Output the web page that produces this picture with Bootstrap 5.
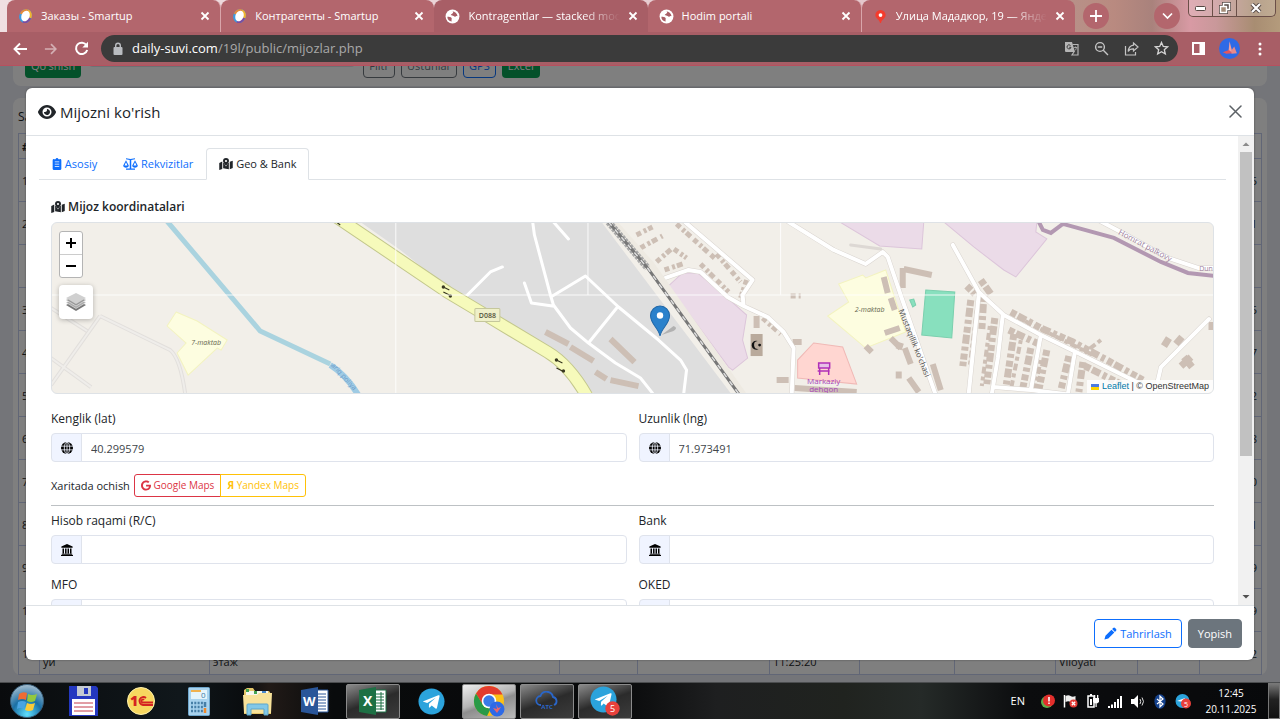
<!DOCTYPE html>
<html lang="uz">
<head>
<meta charset="utf-8">
<meta name="viewport" content="width=device-width, initial-scale=1">
<title>Mijozlar</title>
<link href="https://cdn.jsdelivr.net/npm/bootstrap@5.3.0/dist/css/bootstrap.min.css" rel="stylesheet">
<style>
:root{--ui:"Open Sans","Noto Sans",sans-serif}
html,body{height:100%}
body{font-family:var(--ui);font-size:12px;line-height:18px;color:#212529;overflow:hidden}
button,input{font-family:inherit}
svg{display:block;flex:none}
.ico{display:inline-block;vertical-align:-2px;fill:currentColor}

/* browser chrome */
.strip{height:32px;background:linear-gradient(90deg,#f0dfe2 0,#e4c6cb 70%,#b7928a 83%,#b98a80 87%,#a9827c 90%,#d89aa4 93%,#c9989a 95%,#a88d72 98%,#b49b7c 100%);padding-left:7px}
.tabset{flex:0 1 1068px;min-width:0}
.btab{flex:1 1 0;min-width:0;height:32px;background:#b3666d;color:#fff;padding:0 10px 0 11px;gap:8px;border-radius:8px 8px 0 0}
.btab.on{background:#a85e66}
.btab.sep{border-right:1px solid #d9a5aa;border-radius:8px 8px 0 0}
.btab .ttl{flex:1;min-width:0;overflow:hidden;white-space:nowrap;line-height:20px;font-size:11px}
.btab .fade-end{-webkit-mask-image:linear-gradient(90deg,#000 75%,transparent);mask-image:linear-gradient(90deg,#000 75%,transparent)}
.plain{border:0;background:none;padding:0;color:inherit;display:flex;align-items:center;justify-content:center}
.round{width:26px;height:26px;border-radius:50%;background:#b3666d;color:#fff}
.wctl{height:17px;border:1px solid #6b4f48;border-top:0;border-radius:0 0 5px 5px;margin-right:4px;background:#ffffff30}
.wctl button{width:24px;border-right:1px solid #6b4f48}
.wctl button:last-child{width:38px;border:0}
.tools{height:34px;background:#a85e66;border-bottom:1px solid #b8505f;color:#fff;padding:0 18px 0 12px}
.addr{height:27px;border-radius:14px;background:#3b3b3b;padding:0 9px 0 11px;margin-left:12px}
.addr .site{font-size:13px;color:#fff}
.addr .rest{font-size:13px;color:#a9a9a9}

/* page under the dialog */
.pagearea{background:#e8eaf2}
.pcard{background:#fff;border-radius:8px;margin:0 13px}
.ptools{padding:0 12px 8px;margin-top:-16px;height:36px;gap:6px}
.ptools .btn{font-size:11px;line-height:18px;padding:6px 5px 2px;border-radius:4px;height:28px}
.pgreen{background:#08a254;color:#fff}
.grid{table-layout:fixed;width:100%;margin:0;font-size:11px}
.grid td,.grid th{height:43px;border:1px solid #c3cdec;padding:0 3px;vertical-align:middle;line-height:17px}
.grid th{height:25px}
.grid td:last-child{text-align:right;padding-right:4px}
.shade{background:rgba(0,0,0,.5);padding:22px 26px}

/* dialog */
.dlg{background:#fff;border-radius:6px;overflow:hidden;box-shadow:0 0 2px #444}
.dlg-head{height:48px;padding:0 12px;border-bottom:1px solid #dee2e6}
.dlg-head h1{font-size:15px;line-height:22px;font-weight:400}
.dlg-main{padding:12px 12px 0 13px}
.nav-tabs .nav-link{font-size:11px;padding:6px 12px;line-height:18px;border-radius:4px 4px 0 0;color:#0d6efd}
.nav-tabs .nav-link.active{color:#212529}
.pane{padding:18px 12px 0}
.pane h2{font-size:12px;line-height:18px;margin:0 0 6px;font-weight:600}
.mapbox{height:172px;border:1px solid #dee2e6;border-radius:6px;background:#f2efe9;margin-bottom:16px}
.mapbox>svg{width:100%;height:100%}
.zoomer{left:7px;top:8px;border:1px solid #b4b4b4;border-radius:3px;background:#fff;width:24px}
.zoomer button{width:22px;height:22px;color:#000}
.zoomer button+button{border-top:1px solid #ccc;height:23px}
.layers{left:7px;top:62px;width:34px;height:34px;border-radius:4px;background:#fff;box-shadow:0 1px 5px #0004}
.attrib{right:0;bottom:0;background:#ffffffd0;font:9px/13px "Liberation Sans",sans-serif;padding:0 4px;color:#333}
.attrib a{color:#0078a8;text-decoration:none}
.fields{--bs-gutter-x:12px}
.fields label{display:block;margin-bottom:5px;line-height:18px}
.fields .input-group-text{width:31px;padding:0 9px;background:#f0f4ff;border-color:#dfe3ec;border-radius:4px;color:#212529}
.fields .form-control{height:29px;min-height:0;padding:5px 9px 4px;font-size:11px;line-height:18px;border-color:#dfe3ec;border-radius:4px;color:#41464b}
.maps{margin:12px 0 8px;gap:4px;font-size:11px}
.maps .btn{font-size:10px;line-height:15px;padding:3px 6px;border-radius:3px}
.pane hr{margin:0 0 6px;color:#6c757d;opacity:.45}
.sbar{width:16px;background:#f1f1f1;color:#505050}
.sbar i{display:block;width:12px;height:304px;background:#c1c1c1}
.dlg-foot{height:55px;border-top:1px solid #dee2e6;padding:0 12px;gap:6px}
.dlg-foot .btn{font-size:11px;line-height:18px;padding:5px 9px;height:29px;border-radius:4px}

/* taskbar */
.task{height:37px;background:linear-gradient(90deg,#090b0d 0,#10171b 14%,#0a0d0f 19%,#211a17 21%,#090b0c 26%,#08090a 48%,#1e1f20 56%,#20231f 66%,#252a28 72%,#0b0c0e 80%,#08090b 100%);border-top:1px solid #4b4d4f;color:#fff}
.tslot{width:58px;height:36px;padding:0 2px}
.tslot.run>span{width:54px;height:35px;border:1px solid #8b8b8b;border-radius:2px;background:linear-gradient(160deg,#8a8a8a,#2b2b2b 50%,#3c3c3c)}
.tslot.now>span{background:linear-gradient(160deg,#eee,#b5b5b5 45%,#8e8e8e 55%,#bbb)}
.tslot span{display:flex;align-items:center;justify-content:center}
.clk{width:66px;text-align:center;line-height:16px;margin:0 4px 0 7px;font-size:10px}
.desk{width:12px;height:36px;border:1px solid #777;background:linear-gradient(#777,#222 45%,#111)}
</style>
</head>
<body class="d-flex flex-column">
<svg width="0" height="0" class="position-absolute" aria-hidden="true">
 <defs>
  <symbol id="x" viewBox="0 0 10 10"><path d="M1.500 1.500l7 7m0-7l-7 7" stroke="currentColor" stroke-width="1.800" fill="none"/></symbol>
  <symbol id="smart" viewBox="0 0 16 16"><g transform="rotate(25 8 8)"><ellipse cx="8" cy="8" rx="6.600" ry="7.600" fill="#3c9ae0"/><path d="M8 .4a6.600 7.600 0 0 1 6.600 7.600H8z" fill="#f3b32c"/><path d="M8 .4A6.600 7.600 0 0 0 1.400 8H8z" fill="#e58b3c"/><path d="M14.600 8A6.600 7.600 0 0 1 8 15.600V8z" fill="#7b4ca0"/><ellipse cx="8" cy="8" rx="4.300" ry="5.800" fill="#fff"/></g></symbol>
  <symbol id="earth" viewBox="0 0 16 16"><circle cx="8" cy="8" r="7.400" fill="#fff"/><path d="M2.500 8.200c2 .2 3.600 0 4.500 1.400.6 1.200-.5 1.700.2 3.600-3-.2-4.800-2.400-4.700-5zM7 2.500c2 .2 2.300 1.300.9 2.400-.8.7-1.700.7-1.600 1.800.8.6 2 .1 2.900.8.8.8 1.700.9 2.100.4.3-.6 1.200-.7 2.100-.3-.6-2.800-2.700-5.300-6.400-5.100z" fill="#a85e66"/></symbol>
  <symbol id="mapdot" viewBox="0 0 18 16"><path d="M0 6.500l4-1.700v9.700L0 16zM14 5l4-1.500v9.800L14 15zM5.200 6.500l1 .3C7 8.600 8 10 9 11.200c1-1.200 2-2.600 2.800-4.400l1-.3V15l-7.600-1.500z"/><path d="M9 0a4 4 0 0 0-4 4c0 1.900 2.600 4.900 4 6.200 1.400-1.300 4-4.300 4-6.200a4 4 0 0 0-4-4zm0 5.400A1.400 1.400 0 1 1 9 2.600a1.400 1.400 0 0 1 0 2.800z" fill-rule="evenodd"/></symbol>
  <symbol id="globe" viewBox="0 0 16 16"><circle cx="8" cy="8" r="8"/><g fill="none" stroke="#f0f4ff" stroke-width="1.100"><ellipse cx="8" cy="8" rx="3.600" ry="7.900"/><path d="M0 5.500h16M0 10.500h16M8 0v16"/></g></symbol>
  <symbol id="bank" viewBox="0 0 16 16"><path d="M8 0l7.500 3.400V5H.5V3.400zM2 6h2v6.500H2zm3.400 0h2v6.500h-2zm3.300 0h2v6.500h-2zM12 6h2v6.500h-2zM1 13h14v1.200H1zM0 14.500h16V16H0z"/></symbol>
  <symbol id="tg" viewBox="0 0 28 28"><circle cx="14" cy="14" r="13.500" fill="#2ba3dc"/><path d="M5.500 13.700l15.600-6.200c.8-.3 1.500.2 1.200 1.200l-2.600 11.800c-.2.9-.8 1.100-1.500.7l-4-3-2 1.900c-.4.4-.9.3-.9-.4l.2-3.400 6.900-6.200-8.800 5.400-3.900-1.200c-.8-.2-.8-.4-.2-.6z" fill="#fff"/></symbol>
 </defs>
</svg>

<header>
 <div class="strip d-flex align-items-center">
  <div class="tabset d-flex">
   <div class="btab sep d-flex align-items-center"><svg width="15" height="16"><use href="#smart"/></svg><span class="ttl">Заказы - Smartup</span><button class="plain" aria-label="Yopish"><svg width="10" height="10"><use href="#x"/></svg></button></div>
   <div class="btab d-flex align-items-center"><svg width="15" height="16"><use href="#smart"/></svg><span class="ttl">Контрагенты - Smartup</span><button class="plain" aria-label="Yopish"><svg width="10" height="10"><use href="#x"/></svg></button></div>
   <div class="btab on d-flex align-items-center"><svg width="15" height="15"><use href="#earth"/></svg><span class="ttl fade-end">Kontragentlar — stacked moda</span><button class="plain" aria-label="Yopish"><svg width="10" height="10"><use href="#x"/></svg></button></div>
   <div class="btab sep d-flex align-items-center"><svg width="15" height="15"><use href="#earth"/></svg><span class="ttl">Hodim portali</span><button class="plain" aria-label="Yopish"><svg width="10" height="10"><use href="#x"/></svg></button></div>
   <div class="btab d-flex align-items-center"><svg width="15" height="15" viewBox="0 0 16 16"><path d="M8 1a5.500 5.500 0 0 0-5.500 5.500C2.500 10 7 11.500 7.500 15h1c.5-3.500 5-5 5-8.500A5.500 5.500 0 0 0 8 1z" fill="#f43b2d"/><circle cx="8" cy="6.500" r="2" fill="#fff"/></svg><span class="ttl fade-end">Улица Мададкор, 19 — Яндек</span><button class="plain" aria-label="Yopish"><svg width="10" height="10"><use href="#x"/></svg></button></div>
  </div>
  <button class="plain round ms-2" aria-label="Yangi oyna"><svg width="12" height="12" viewBox="0 0 12 12"><path d="M6 0v12M0 6h12" stroke="#fff" stroke-width="1.800"/></svg></button>
  <button class="plain round ms-auto me-2" aria-label="Oynalar"><svg width="11" height="8" viewBox="0 0 11 8"><path d="M1 1.500l4.500 4.500L10 1.500" fill="none" stroke="#fff" stroke-width="1.700"/></svg></button>
  <div class="wctl d-flex align-self-start">
   <button class="plain" aria-label="Kichraytirish"><svg width="11" height="5" viewBox="0 0 11 5"><rect x=".5" y=".5" width="10" height="4" rx="1" fill="#fff" stroke="#554844"/></svg></button>
   <button class="plain" aria-label="Tiklash"><svg width="12" height="12" viewBox="0 0 12 12"><g fill="none" stroke="#554844" stroke-width="3"><rect x="4.500" y="1.500" width="6" height="6"/><rect x="1.500" y="4.500" width="6" height="6"/></g><g fill="none" stroke="#fff" stroke-width="1.500"><rect x="4.500" y="1.500" width="6" height="6"/><rect x="1.500" y="4.500" width="6" height="6" fill="#a58c78"/></g></svg></button>
   <button class="plain" aria-label="Yopish"><svg width="12" height="10" viewBox="0 0 12 10"><path d="M2 1l8 8M10 1L2 9" stroke="#554844" stroke-width="4"/><path d="M2 1l8 8M10 1L2 9" stroke="#fff" stroke-width="2.200"/></svg></button>
  </div>
 </div>
 <div class="tools d-flex align-items-center">
  <button class="plain" aria-label="Orqaga"><svg width="16" height="14" viewBox="0 0 16 14"><path d="M15 7H3M8 1.500L2.500 7 8 12.500" fill="none" stroke="#fff" stroke-width="1.900"/></svg></button>
  <button class="plain opacity-50 ms-3" aria-label="Oldinga"><svg width="14" height="14" viewBox="0 0 16 14"><path d="M1 7h12M8 1.500L13.500 7 8 12.500" fill="none" stroke="#fff" stroke-width="1.900"/></svg></button>
  <button class="plain ms-3" aria-label="Yangilash"><svg width="15" height="15" viewBox="0 0 15 15"><path d="M12.500 4.200A5.700 5.700 0 1 0 13.200 9" fill="none" stroke="#fff" stroke-width="2"/><path d="M14 .8V6.500H8.300z" fill="#fff"/></svg></button>
  <div class="addr d-flex align-items-center flex-grow-1">
   <svg width="12" height="14" viewBox="0 0 12 14"><rect x="1.500" y="5" width="9" height="8" rx="1" fill="#b9bcc0"/><path d="M3.700 5V3.500a2.300 2.300 0 0 1 4.600 0V5" fill="none" stroke="#b9bcc0" stroke-width="1.400"/></svg>
   <div class="flex-grow-1 ps-2"><a class="site text-decoration-none" href="#">daily-suvi.com<span class="rest">/19l/public/mijozlar.php</span></a></div>
   <div class="d-flex align-items-center" style="gap:15px">
    <svg width="15" height="15" viewBox="0 0 15 15"><path d="M1 1h7l3 10H2a1 1 0 0 1-1-1z" fill="#b5b5b5"/><path d="M8.500 3.500H14V14H8l2-3" fill="none" stroke="#b5b5b5" stroke-width="1.200"/><path d="M6.500 4.500a2 2 0 1 0 .5 1.800H5.200" fill="none" stroke="#3b3b3b"/><path d="M9.700 6.500h3.600M11.500 5.500v1m1 0c-.3 1.700-1 2.500-1.800 3.200" fill="none" stroke="#b5b5b5" stroke-width=".8"/></svg>
    <svg width="15" height="15" viewBox="0 0 15 15" fill="none" stroke="#c5c5c5" stroke-width="1.400"><circle cx="6" cy="6" r="4.400"/><path d="M9.300 9.300L14 14M3.800 6h4.400"/></svg>
    <svg width="15" height="15" viewBox="0 0 15 15" fill="none" stroke="#c5c5c5" stroke-width="1.200"><path d="M1.500 5v9h10v-3M9.500 2l4.500 4-4.500 4V7.800C6.500 7.700 5 8.800 4.200 10.500 4.500 7 6.500 4.500 9.500 4.200z"/></svg>
    <svg width="15" height="15" viewBox="0 0 16 16" fill="none" stroke="#d5d5d5" stroke-width="1.400"><path d="M8 1.500l1.900 4.300 4.600.4-3.500 3.100 1.100 4.600L8 11.500l-4.100 2.400L5 9.300 1.500 6.200l4.600-.4z"/></svg>
   </div>
  </div>
  <button class="plain" style="margin:0 14px" aria-label="Yon panel"><svg width="13" height="13" viewBox="0 0 13 13"><path d="M0 0h13v13H0z" fill="#fff"/><path d="M2 2h5.500v9H2z" fill="#a85e66"/></svg></button>
  <button class="plain" aria-label="Profil"><svg width="21" height="21" viewBox="0 0 20 20"><circle cx="10" cy="10" r="10" fill="#2e6ae6"/><path d="M10 3l2.500 9.500-3.500 1z" fill="#f0a0a0"/><path d="M11 13l3.500-5 2.500 6.500-5 .5z" fill="#e98a8a"/><path d="M3.500 13.500l6-2 3 3-5.500.5z" fill="#e3575e"/></svg></button>
  <button class="plain" style="margin-left:18px" aria-label="Menyu"><svg width="4" height="14" viewBox="0 0 4 14" fill="#fff"><circle cx="2" cy="2" r="1.500"/><circle cx="2" cy="7" r="1.500"/><circle cx="2" cy="12" r="1.500"/></svg></button>
 </div>
</header>

<main class="pagearea position-relative flex-grow-1 overflow-hidden">
 <div class="pcard ptools d-flex">
  <button class="btn pgreen">Qo'shish</button>
  <span class="bg-light rounded border" style="width:270px;height:17px"></span>
  <button class="btn btn-outline-secondary">Filtr</button>
  <button class="btn btn-outline-secondary">Ustunlar</button>
  <button class="btn btn-outline-primary">GPS</button>
  <button class="btn pgreen">Excel</button>
 </div>
 <div class="pcard" style="margin-top:12px;padding:10px 5px 0">
  <div style="height:25px">Sahifada</div>
  <table class="grid">
   <colgroup><col style="width:21px"><col style="width:170px"><col style="width:350px"><col style="width:78px"><col style="width:132px"><col style="width:90px"><col style="width:95px"><col style="width:101px"><col style="width:82px"><col style="width:62px"><col></colgroup>
   <thead><tr><th>#</th><th></th><th></th><th></th><th></th><th></th><th></th><th></th><th></th><th></th><th></th></tr></thead>
   <tbody id="rows"></tbody>
  </table>
 </div>

 <div class="shade position-absolute top-0 start-0 w-100 h-100 d-flex">
  <section class="dlg d-flex flex-column flex-grow-1" role="dialog" aria-labelledby="dlgTitle">
   <div class="dlg-head d-flex align-items-center flex-shrink-0">
    <svg width="18" height="16" viewBox="0 0 576 512" fill="#212529"><path d="M288 32c-80.800 0-145.500 36.800-192.600 80.600C48.600 156 17.300 208 2.500 243.700c-3.300 7.900-3.300 16.700 0 24.600C17.300 304 48.600 356 95.400 399.400C142.500 443.200 207.200 480 288 480s145.500-36.800 192.600-80.600c46.800-43.500 78.100-95.400 93-131.100c3.300-7.900 3.300-16.700 0-24.600c-14.900-35.700-46.200-87.700-93-131.100C433.500 68.800 368.800 32 288 32zM144 256a144 144 0 1 1 288 0 144 144 0 1 1-288 0zm144-64c0 35.300-28.700 64-64 64c-7.100 0-13.900-1.200-20.300-3.300c-5.500-1.800-11.900 1.600-11.700 7.400c.3 6.900 1.300 13.800 3.200 20.700c13.700 51.200 66.400 81.600 117.600 67.900s81.600-66.400 67.900-117.600c-11.100-41.500-47.800-69.400-88.600-71.100c-5.800-.2-9.200 6.100-7.400 11.700c2.100 6.400 3.300 13.200 3.300 20.300z"/></svg>
    <h1 id="dlgTitle" class="mb-0 ms-1 flex-grow-1">Mijozni ko'rish</h1>
    <button class="plain" aria-label="Yopish"><svg width="13" height="13" viewBox="0 0 13 13"><path d="M1 1l11 11M12 1L1 12" stroke="#5c6166" stroke-width="1.500" stroke-linecap="round"/></svg></button>
   </div>
   <div class="d-flex flex-grow-1 overflow-hidden" style="min-height:0">
    <div class="dlg-main flex-grow-1 overflow-hidden">
     <ul class="nav nav-tabs">
      <li class="nav-item"><a class="nav-link" href="#"><svg class="ico" width="10" height="12" viewBox="0 0 12 16"><path fill-rule="evenodd" d="M6 0a2 2 0 0 0-1.900 1.500H2A1.700 1.700 0 0 0 .2 3.200v11A1.700 1.700 0 0 0 2 16h8a1.700 1.700 0 0 0 1.800-1.800v-11A1.700 1.700 0 0 0 10 1.500H7.900A2 2 0 0 0 6 0zM3 4.500h6v1.100H3zm0 3h6v1.200H3zm0 3h6v1.200H3z"/></svg> Asosiy</a></li>
      <li class="nav-item"><a class="nav-link" href="#"><svg class="ico" width="15" height="12" viewBox="0 0 20 16"><path d="M9 2.500V14H4v1.800h12V14h-5V2.500l5-.8V.3L10 1.300 4 .3v1.400zM4 3L.3 10c0 1.700 1.600 3 3.700 3s3.700-1.300 3.700-3zm0 2.800L6 10H2zM16 3l-3.700 7c0 1.700 1.600 3 3.700 3s3.700-1.300 3.700-3zm0 2.800l2 4.200h-4z" fill-rule="evenodd"/></svg> Rekvizitlar</a></li>
      <li class="nav-item"><a class="nav-link active" href="#"><svg class="ico" width="14" height="12"><use href="#mapdot"/></svg> Geo &amp; Bank</a></li>
     </ul>
     <div class="pane">
      <h2><svg class="ico" width="14" height="12"><use href="#mapdot"/></svg> Mijoz koordinatalari</h2>
      <div class="mapbox position-relative overflow-hidden">
       <svg viewBox="52 223 1160 170" preserveAspectRatio="xMidYMid slice" font-family="Open Sans, Noto Sans, sans-serif">
        <path d="M360 222L400 250 440 282 500 325 560 365 593 393H730L601 222z" fill="#dedede"/>
        <!-- land areas -->
        <path d="M176 312l21 9 30 19-6 10-4-2-29 27-11-22 9-10-19-17zM838 284l24-9 3 3 20-8 20 62-40 16-38-32 21-14z" fill="#fdfde0" stroke="#f3f3c0"/>
        <path d="M668 286l14-13h15l23 19 26 23-4 25 5 18-15 12-4-3zM839 222l40 24 42 3 2-27zM943 222l30 25 30 23 12 7 31-38-11-7 1-10z" fill="#ebdbe8" stroke="#dcc5da"/>
        <path d="M813 343l29 4 14 37-59-6v-18z" fill="#ffd6d1" stroke="#f0b9b6"/>
        <path d="M925 290l29 2-3 46-30-3zM909 300l4-1 2 6-3 2z" fill="#88e0be" stroke="#7bcfae"/>
        <!-- houses -->
        <g stroke="#cdbfb5" fill="none">
         <g stroke-width="6"><path d="M545 332l23 12M570 347l23 14M595 372l11 7M610 380l28 6M610 339l24 23M794 388l62 4M776 380h12M756 316v12M792 342h9M883 277l4 16M890 298l4 12M884 333l15-5M902 268v20M903 269l28 6M890 338l10 10M904 348l6 16M908 378l10 14M932 364l8 26M865 346l6 6"/></g>
         <g stroke-width="5" stroke-dasharray="5 3 3 2 6 4"><path d="M676 224l40 36M716 254l24 28M700 264l28 28M636 235l16-8M640 248l22-12M656 262l16-14 14 10M664 270l18-6M762 318l18 16M746 280l-6 18M790 296h10"/></g>
         <g stroke-width="7" stroke-dasharray="6 2 9 3 4 3"><path d="M970 300l-8 66M983 296l-2 34M994 318l-8 66M1010 312l30 16 32 14 34 18 36 20M1008 330l30 14M1013 334l-8 54M1030 348l-8 40M1046 350l-8 40M1068 356l-8 34M1082 362l-4 30M1084 366l36 18M966 286l8 8M980 280l10 14"/></g>
         <g stroke-width="4" stroke-dasharray="4 3 7 3"><path d="M976 310l-7 56M989 326l-8 60M1018 318l40 20 36 18M1020 340l-10 50M1100 340l-18 14M1040 360l-6 28"/></g>
         <path d="M1163 346l5-8M1175 344l6-7M1180 366l10-9M1183 357l8 10M896 345l6 2M895 375h6M1211 322v8" stroke-width="7"/>
        </g>
        <path d="M750 334h12v22h-12z" fill="#b9aa9c"/>
        <path d="M757 341a4.500 4.500 0 1 0 1 8 3.600 3.600 0 1 1-1-8z" fill="#111"/><circle cx="759" cy="345" r="1.400" fill="#111"/>
        <!-- water and quiet tracks -->
        <path d="M165 219l95 112 70 33" fill="none" stroke="#aad3df" stroke-width="5"/><path d="M330 365q16 10 28 30" fill="none" stroke="#9fcbe4" stroke-width="6"/>
        <path d="M51 308l36 23M100 316L51 385M100 316l70 34q10 8 15 43M51 358l40 29" fill="none" stroke="#e2dfdc" stroke-width="4"/><path d="M51 308l36 23M100 316L51 385M100 316l70 34q10 8 15 43M51 358l40 29" fill="none" stroke="#efedea" stroke-width="2"/>
        <!-- streets -->
        <g fill="none" stroke-linejoin="round" stroke-linecap="round">
         <path d="M682 220l70 60-10 15 1 11M665 278l23-8 12 2 27 25 16 9 24 11 16 15 10 16-2 48M788 222l45 28 32 14 17-12 5 5 15 44 33 94M952 245l26 47 25 23 37 20 35 17 67 33M978 294l-10 99M1002 315l-5 43-6 36M1040 335l-10 55M1074 352l-7 42M993 387l37 3 34 4M1154 393l6-26 48-48M1097 220l23 12 47 26 30 10h16" stroke="#d9d4cf" stroke-width="5"/>
         <path d="M682 220l70 60-10 15 1 11M665 278l23-8 12 2 27 25 16 9 24 11 16 15 10 16-2 48M788 222l45 28 32 14 17-12 5 5 15 44 33 94M952 245l26 47 25 23 37 20 35 17 67 33M978 294l-10 99M1002 315l-5 43-6 36M1040 335l-10 55M1074 352l-7 42M993 387l37 3 34 4M1154 393l6-26 48-48M1097 220l23 12 47 26 30 10h16" stroke="#fff" stroke-width="4"/>
         <path d="M532 220l2 15 16 60 3 10 17 23 18 15 27 20 25 15 12 15M552 296l33-20 33 31 40 33 22 20 6 10-3 25M617 307l-29 36M524 283l7 20 21 3M465 297l25-25 12-5M553 222l15 17" stroke="#fff" stroke-width="3"/>
         <path d="M850 245l30 4" stroke="#ddd8d4" stroke-width="3"/>
        </g>
        <path d="M1037 220l5 10 8 3 12-9 51 14 47 24 27 11 26 3" fill="none" stroke="#b398b2" stroke-width="4"/>
        <!-- railway -->
        <path d="M612 222l38 43 92 130" fill="none" stroke="#eeeae2" stroke-width="8"/>
        <path d="M608 222l39 46" fill="none" stroke="#aaa" stroke-width="7" stroke-dasharray="3 1"/>
        <path d="M608 222l39 46 92 127" fill="none" stroke="#777" stroke-width="3"/><path d="M608 222l39 46 92 127" fill="none" stroke="#ddd" stroke-width="1.500" stroke-dasharray="5 5"/>
        <!-- main road -->
        <g fill="none"><path d="M336 217l111 75 40 24 60 36q22 13 40 45" stroke="#c3c78c" stroke-width="13"/><path d="M336 217l111 75 40 24 60 36q22 13 40 45" stroke="#f6fabb" stroke-width="11"/></g>
        <path d="M443 287l6 3M449 295l-6-3M556 360l6 3M562 371l-6-3M336 222l4 3" stroke="#383820" stroke-width="1.200"/><g fill="#383820"><circle cx="443" cy="287" r="1.700"/><circle cx="450" cy="296" r="1.700"/><circle cx="556" cy="360" r="1.700"/><circle cx="563" cy="371" r="1.700"/></g>
        <path d="M51 295H1213M395.500 222V393M587.500 222V295M780 222V295" stroke="#fff" stroke-width="1" opacity=".85"/>
        <rect x="474.500" y="308.500" width="25" height="13" rx="1" fill="#eff0c9" stroke="#c5c79c"/>
        <g text-anchor="middle" font-size="7">
         <text x="487" y="318" fill="#55553c" font-weight="600">D088</text>
         <text x="206" y="345" fill="#66664e" font-style="italic">7-maktab</text>
         <text x="869" y="312" fill="#66664e" font-style="italic">2-maktab</text>
         <g fill="#a844ba" font-size="8"><text x="823" y="384">Markaziy</text><text x="823" y="392">dehqon</text></g>
         <text transform="translate(1143 248) rotate(28)" fill="#9d7f9e" font-size="8">Homrat palkovy</text>
         <text x="1205" y="271" fill="#9d7f9e">Dun</text>
         <text transform="translate(911 344) rotate(68)" fill="#555" font-size="8">Mustaqillik ko'chasi</text>
         <text transform="translate(342 378) rotate(48)" fill="#6d9ccb" font-size="7">ariq poliya</text>
        </g>
        <path d="M818 363h11v5h-11zM819 368v7M828 368v7M817 371h12" fill="#e7c2e7" stroke="#b030b8" stroke-width="1.500"/>
        <path d="M661 335l12-9q5 2 0 5z" fill="#0003"/>
        <path d="M659.500 336C658 328 650 324 650 315.500a9.500 9.500 0 0 1 19 0C669 324 661 328 659.500 336z" fill="#2a81cb" stroke="#2168a8"/><circle cx="659.500" cy="315.500" r="3.200" fill="#fff"/>
       </svg>
       <div class="zoomer position-absolute"><button class="plain" aria-label="Kattalashtirish"><svg width="10" height="10" viewBox="0 0 10 10"><path d="M5 0v10M0 5h10" stroke="#000" stroke-width="2"/></svg></button><button class="plain" aria-label="Kichiklashtirish"><svg width="10" height="4" viewBox="0 0 10 4"><path d="M0 2h10" stroke="#000" stroke-width="2"/></svg></button></div>
       <button class="layers plain position-absolute" aria-label="Qatlamlar"><svg width="20" height="20" viewBox="0 0 20 20"><path d="M0 13l10 6 10-6-10-5z" fill="#777"/><path d="M0 10.500l10 6 10-6-10-5z" fill="#aaa" stroke="#eee" stroke-width=".6"/><path d="M0 8l10 6 10-6-10-5z" fill="#999" stroke="#eee" stroke-width=".6"/><path d="M0 6l10 6 10-6L10 1z" fill="#d0d0d0"/></svg></button>
       <div class="attrib position-absolute d-flex align-items-center"><svg width="8" height="6" style="margin-right:3px"><path d="M0 0h8v3H0z" fill="#4c7be1"/><path d="M0 3h8v3H0z" fill="#ffd500"/></svg><a href="#">Leaflet</a><span>&nbsp;| © OpenStreetMap</span></div>
      </div>
      <div class="row fields">
       <div class="col-6"><label for="lat">Kenglik (lat)</label><div class="input-group flex-nowrap"><span class="input-group-text"><svg width="12" height="12"><use href="#globe"/></svg></span><input id="lat" class="form-control" value="40.299579"></div></div>
       <div class="col-6"><label for="lng">Uzunlik (lng)</label><div class="input-group flex-nowrap"><span class="input-group-text"><svg width="12" height="12"><use href="#globe"/></svg></span><input id="lng" class="form-control" value="71.973491"></div></div>
      </div>
      <div class="maps d-flex align-items-center"><span>Xaritada ochish</span>
       <div class="btn-group"><a class="btn btn-outline-danger" href="#"><svg class="ico" width="10" height="11" viewBox="0 0 488 512"><path d="M488 261.800C488 403.300 391.100 504 248 504 110.800 504 0 393.200 0 256S110.800 8 248 8c66.800 0 123 24.500 166.300 64.900l-67.500 64.900C258.500 52.600 94.300 116.600 94.300 256c0 86.500 69.100 156.600 153.700 156.600 98.200 0 135-70.400 140.800-106.900H248v-85.300h236.100c2.300 12.700 3.900 24.900 3.900 41.400z"/></svg> Google Maps</a><a class="btn btn-outline-warning" href="#"><b>Я</b> Yandex Maps</a></div>
      </div>
      <hr>
      <div class="row fields">
       <div class="col-6"><label for="rc">Hisob raqami (R/C)</label><div class="input-group flex-nowrap"><span class="input-group-text"><svg width="12" height="12"><use href="#bank"/></svg></span><input id="rc" class="form-control"></div></div>
       <div class="col-6"><label for="bk">Bank</label><div class="input-group flex-nowrap"><span class="input-group-text"><svg width="12" height="12"><use href="#bank"/></svg></span><input id="bk" class="form-control"></div></div>
      </div>
      <div class="row fields" style="margin-top:12px">
       <div class="col-6"><label for="mfo">MFO</label><div class="input-group flex-nowrap"><span class="input-group-text"></span><input id="mfo" class="form-control"></div></div>
       <div class="col-6"><label for="oked">OKED</label><div class="input-group flex-nowrap"><span class="input-group-text"></span><input id="oked" class="form-control"></div></div>
      </div>
     </div>
    </div>
    <div class="sbar d-flex flex-column align-items-center flex-shrink-0">
     <svg width="16" height="16" viewBox="0 0 16 16"><path d="M4.500 10L8 6.500l3.500 3.500z" fill="#8b8b8b"/></svg><i></i><svg class="mt-auto" width="16" height="16" viewBox="0 0 16 16"><path d="M4.500 6L8 9.500 11.500 6z" fill="#505050"/></svg>
    </div>
   </div>
   <div class="dlg-foot d-flex align-items-center justify-content-end flex-shrink-0">
    <button class="btn btn-outline-primary"><svg class="ico" width="13" height="13" viewBox="0 0 16 16"><path d="M11.300 1.200a1.600 1.600 0 0 1 2.300 0l1.200 1.200a1.600 1.600 0 0 1 0 2.300L13.500 6 10 2.500zM9.200 3.300l3.500 3.500-7.400 7.400L.5 15.500l1.300-4.800z"/></svg> Tahrirlash</button>
    <button class="btn btn-secondary">Yopish</button>
   </div>
  </section>
 </div>
</main>

<footer class="task d-flex align-items-center flex-shrink-0">
 <div class="tslot d-flex align-items-center justify-content-center" style="width:54px"><svg width="36" height="36" viewBox="0 0 36 36"><defs><radialGradient id="orb" cx=".5" cy=".9" r=".9"><stop offset="0" stop-color="#5fe0ff"/><stop offset=".5" stop-color="#1a6fa5"/><stop offset="1" stop-color="#a8bfd0"/></radialGradient></defs><circle cx="18" cy="18" r="16.500" fill="url(#orb)" stroke="#385d78"/><path d="M10 11q4-3 8-1l-1 7q-4-2-8 0z" fill="#ee6c33"/><path d="M19 11q4 2 9 0l-2 7q-4 2-8 0z" fill="#93c83e"/><path d="M9 19q4-2 8 0l-2 7q-4-2-7 0z" fill="#4aa4e2"/><path d="M18 20q4 2 8 0l-2 7q-4 2-8 0z" fill="#fccb38"/></svg></div>
 <div class="tslot d-flex align-items-center justify-content-center"><svg width="31" height="32" viewBox="0 0 31 32"><path d="M1 1h27l2 2v28H1z" fill="#2438c0"/><path d="M9 1h14v10H9z" fill="#c4cad2"/><path d="M16 3h4v6h-4z" fill="#2438c0"/><path d="M4 14h23v16H4z" fill="#fff"/><path d="M6 18h19M6 22h19M6 26h19" stroke="#c43c4b"/></svg></div>
 <div class="tslot d-flex align-items-center justify-content-center"><svg width="28" height="28" viewBox="0 0 28 28"><circle cx="14" cy="14" r="13.500" fill="#f7d75f" stroke="#fff2ad"/><text x="3" y="19" font-size="14" font-weight="800" fill="#d42321" font-family="Open Sans, sans-serif">1</text><path d="M19 11a4 4 0 1 0-3 7h10M17 13a1.500 1.500 0 1 0-1 2.500h10" fill="none" stroke="#d42321" stroke-width="1.800"/></svg></div>
 <div class="tslot d-flex align-items-center justify-content-center"><svg width="22" height="29" viewBox="0 0 22 29"><rect x=".5" y=".5" width="21" height="28" rx="1" fill="#a9d3ee" stroke="#6ea6cc"/><path d="M3 3h16v9H3z" fill="#e5f4fb"/><path d="M3 3h10v2H3z" fill="#f0b14f"/><text x="13" y="11" font-size="8" fill="#3b79a5">0</text><path d="M3 16h12M3 20h12M3 24h12" stroke="#477fa7" stroke-width="2.400" stroke-dasharray="2 1.300"/><path d="M17 15v5" stroke="#477fa7" stroke-width="2.500"/><path d="M17 21v5" stroke="#ef8a2c" stroke-width="2.500"/></svg></div>
 <div class="tslot d-flex align-items-center justify-content-center"><svg width="31" height="29" viewBox="0 0 31 29"><path d="M2 3l3-2h6l2 3h14l2 3v20H2z" fill="#e6c669"/><path d="M4 4h22v5H4z" fill="#f7f7ee"/><path d="M4 2h3v3H4zM12 4h3v3h-3z" fill="#44a652"/><path d="M20 4h4v2h-4z" fill="#4a89cd"/><path d="M1 8h14l2-2h13l-1 20H2z" fill="#f8e29a"/><path d="M5 28V18q0-1 1-1h19q1 0 1 1v10h-4v-6H9v6z" fill="#82c8e8" stroke="#5fa6ca"/></svg></div>
 <div class="tslot d-flex align-items-center justify-content-center"><svg width="28" height="28" viewBox="0 0 28 28"><path d="M14 3h13v22H14z" fill="#fff" stroke="#2a5699"/><path d="M17 7h8M17 10h8M17 13h8M17 16h8M17 19h8M17 22h8" stroke="#2a5699"/><path d="M0 3l17-3v28L0 25z" fill="#2a5699"/><text x="2" y="19" font-size="13" font-weight="700" fill="#fff" font-family="Open Sans, sans-serif">W</text></svg></div>
 <div class="tslot run d-flex align-items-center justify-content-center"><span><svg width="28" height="28" viewBox="0 0 28 28"><path d="M14 3h13v22H14z" fill="#fff" stroke="#1d7044"/><path d="M17 7h8M17 10h8M17 13h8M17 16h8M17 19h8M17 22h8M22 5v18" stroke="#1d7044"/><path d="M0 3l17-3v28L0 25z" fill="#1d7044"/><text x="4" y="19" font-size="14" font-weight="700" fill="#fff" font-family="Open Sans, sans-serif">X</text></svg></span></div>
 <div class="tslot d-flex align-items-center justify-content-center"><svg width="27" height="27"><use href="#tg"/></svg></div>
 <div class="tslot run now d-flex align-items-center justify-content-center"><span><svg width="32" height="32" viewBox="0 0 32 32"><circle cx="16" cy="16" r="15" fill="#fbc116"/><path d="M3 8.500A15 15 0 0 1 29.500 9.500H16l-6.500 10z" fill="#e33b2e"/><path d="M3 8.500l7 11.500q3 4 8 3l-4 8A15 15 0 0 1 3 8.500z" fill="#2a9a47"/><circle cx="16" cy="16" r="7.300" fill="#fff"/><circle cx="16" cy="16" r="5.700" fill="#3a7ae8"/><circle cx="24" cy="24" r="7.500" fill="#2e6ae6"/><path d="M23 19l1 5-4-1 4 5 4-6-3 1z" fill="#e9676c"/></svg></span></div>
 <div class="tslot run d-flex align-items-center justify-content-center"><span><svg width="24" height="20" viewBox="0 0 24 20"><path d="M6 14a4.500 4.500 0 0 1-.5-9A6.500 6.500 0 0 1 18 6a4.200 4.200 0 0 1 1 8" fill="none" stroke="#2a66c8" stroke-width="1.800"/><text x="12" y="18" text-anchor="middle" font-size="6" font-weight="700" fill="#2a66c8">ATC</text></svg></span></div>
 <div class="tslot run d-flex align-items-center justify-content-center"><span><svg width="30" height="30" viewBox="0 0 30 30"><use href="#tg" width="27" height="27"/><circle cx="22.500" cy="22.500" r="7.200" fill="#e8403b"/><text x="22.500" y="26" text-anchor="middle" font-size="9" fill="#fff">5</text></svg></span></div>
 <div class="ms-auto d-flex align-items-center">
  <span style="font-size:11px;margin-right:16px">EN</span>
  <div class="d-flex align-items-center" style="gap:8px">
   <svg width="14" height="14" viewBox="0 0 14 14"><circle cx="6" cy="8" r="6" fill="#5fae4b"/><circle cx="8" cy="6.500" r="6" fill="#e22f2c"/><path d="M8 3v4.500M8 8.500v1.500" stroke="#fff" stroke-width="1.600"/></svg>
   <svg width="15" height="14" viewBox="0 0 15 14"><path d="M1.500 1v12.500" stroke="#fff" stroke-width="1.500"/><path d="M2.500 2q3-1.500 5 0t5 0v6q-3 1.500-5 0t-5 0z" fill="#eee"/><circle cx="10.500" cy="9.500" r="4" fill="#e33b35"/><path d="M8.800 7.800l3.400 3.400m0-3.400l-3.400 3.400" stroke="#fff" stroke-width="1.300"/></svg>
   <svg width="14" height="14" viewBox="0 0 14 14"><path d="M2 2h6v11H2z" fill="none" stroke="#fff" stroke-width="1.500"/><path d="M4 0h2v2H4zM4 5h2v6H4zM7 4h6v4q-3 3-6 0zM8 1h1.300v3H8zM11 1h1.300v3H11zM9.500 9h1.200v4H9.500z" fill="#fff"/></svg>
   <svg width="15" height="13" viewBox="0 0 15 13" fill="#fff"><path d="M0 11h2v2H0zM3 9.500h2V13H3zM6 7h2v6H6zM9 4h2v9H9zM12 1h2v12h-2z"/></svg>
   <svg width="14" height="13" viewBox="0 0 14 13"><path d="M0 4h3l4-4v13L3 9H0z" fill="#fff"/><path d="M9 4q1.500 2.500 0 5M11 2.500q3 4 0 8" fill="none" stroke="#ddd"/></svg>
   <svg width="14" height="15" viewBox="0 0 14 15"><ellipse cx="7" cy="7.500" rx="5.600" ry="7.300" fill="#14418c"/><path d="M4 5l6 5-3 2.800V2.200L10 5l-6 5" fill="none" stroke="#fff" stroke-width="1.200"/></svg>
   <svg width="16" height="15" viewBox="0 0 16 15"><circle cx="7.500" cy="7" r="7" fill="#2ba3dc"/><path d="M2 7l8-3-1 4z" fill="#fff"/><circle cx="11" cy="9.500" r="5" fill="#e8403b"/><text x="11" y="12.500" text-anchor="middle" font-size="7" fill="#fff">5</text></svg>
  </div>
  <div class="clk">12:45<br>20.11.2025</div>
  <div class="desk"></div>
 </div>
</footer>
<script src="https://cdn.jsdelivr.net/npm/bootstrap@5.3.0/dist/js/bootstrap.bundle.min.js"></script>
<script>
const rows=[[1,5],[2,1],['',''],[3,5],[4,7],[5,2],[6,8],[7,0],[8,1],[9,9],[10,9],[11,2]];
document.getElementById('rows').innerHTML=rows.map(([n,v])=>{
  const c=Array(9).fill('');
  if(n===11){c[0]='Янги<br>уй';c[1]='2-<br>этаж';c[4]='19.11.2025<br>11:25:20';c[7]='Farg\'ona<br>Viloyati'}
  return `<tr><td>${n}</td>${c.map(t=>`<td>${t}</td>`).join('')}<td>${v}</td></tr>`}).join('');
</script>
</body>
</html>
